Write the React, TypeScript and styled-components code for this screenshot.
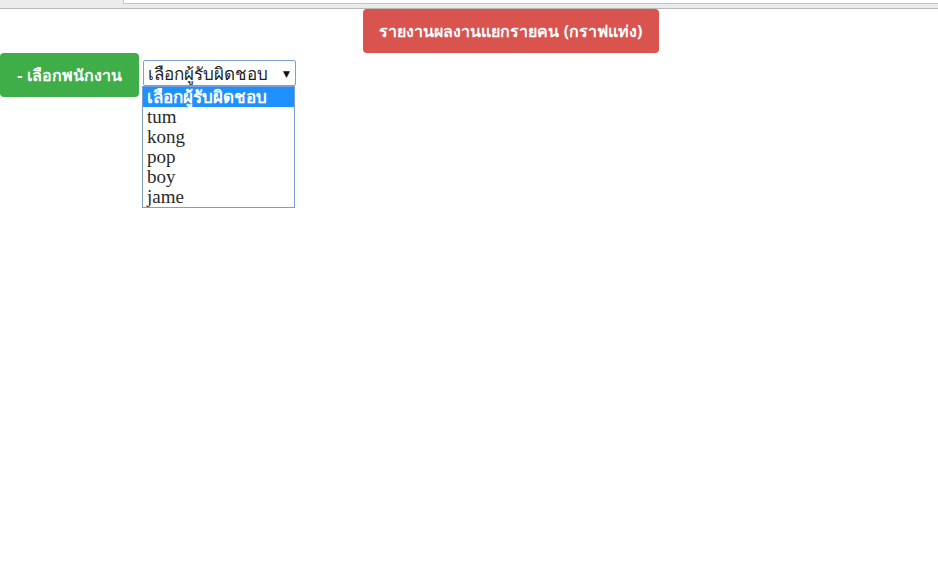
import React from "react";
import styled, { createGlobalStyle } from "styled-components";

const GlobalStyle = createGlobalStyle`
  html, body {
    margin: 0;
    padding: 0;
    background: #fff;
  }
  body {
    font-family: "Noto Sans", "DejaVu Sans", sans-serif;
  }
`;

const Chrome = styled.div`
  height: 8px;
  background: #ebebeb;
  border-bottom: 1px solid #b9b9b9;
  display: flex;
  padding-left: 123px;
`;

const AddressBar = styled.div`
  flex: 1;
  height: 3px;
  background: #fff;
  border-left: 1px solid #c4c4c4;
  border-bottom: 1px solid #c4c4c4;
  border-bottom-left-radius: 2px;
`;

const Header = styled.div`
  display: flex;
  padding-left: 363px;
`;

const Button = styled.div<{ $color: string }>`
  display: inline-flex;
  align-items: center;
  justify-content: center;
  height: 44px;
  box-sizing: border-box;
  background: ${(p) => p.$color};
  color: #fff;
  font-weight: bold;
  font-size: 16px;
  border-radius: 4px;
`;

const ReportButton = styled(Button)`
  width: 296px;
`;

const EmployeeButton = styled(Button)`
  width: 139px;
  flex-shrink: 0;
`;

const Row = styled.div`
  display: flex;
  align-items: flex-start;
  gap: 3px;
`;

const SelectWrap = styled.div`
  display: flex;
  flex-direction: column;
  margin-top: 7px;
`;

const SelectBox = styled.div`
  width: 153px;
  height: 26px;
  margin-left: 1px;
  box-sizing: border-box;
  border: 1px solid #7f9fd4;
  border-radius: 2px;
  display: flex;
  align-items: center;
  justify-content: space-between;
  padding: 0 5px 0 4px;
  font-size: 17px;
  color: #222;
  background: #fff;
`;

const Arrow = styled.span`
  font-size: 9px;
  color: #111;
`;

const ListBox = styled.div`
  width: 153px;
  box-sizing: border-box;
  border: 1px solid #7a9cd3;
  background: #fff;
`;

const Option = styled.div<{ $active?: boolean }>`
  height: 20px;
  line-height: 20px;
  padding-left: 4px;
  white-space: nowrap;
  font-size: ${(p) => (p.$active ? "17px" : "19px")};
  font-weight: ${(p) => (p.$active ? "bold" : "normal")};
  font-family: ${(p) =>
    p.$active ? `"Noto Sans", sans-serif` : `"Liberation Serif", "DejaVu Serif", serif`};
  background: ${(p) => (p.$active ? "#1e90ff" : "#fff")};
  color: ${(p) => (p.$active ? "#fff" : "#2a2a2a")};
`;

const placeholder = "เลือกผู้รับผิดชอบ";
const names = ["tum", "kong", "pop", "boy", "jame"];

export default function App() {
  return (
    <>
      <GlobalStyle />
      <Chrome>
        <AddressBar />
      </Chrome>
      <Header>
        <ReportButton $color="#d9534f">รายงานผลงานแยกรายคน (กราฟแท่ง)</ReportButton>
      </Header>
      <Row>
        <EmployeeButton $color="#3fae49">- เลือกพนักงาน</EmployeeButton>
        <SelectWrap>
          <SelectBox>
            <span>{placeholder}</span>
            <Arrow>▼</Arrow>
          </SelectBox>
          <ListBox>
            <Option $active>{placeholder}</Option>
            {names.map((n) => (
              <Option key={n}>{n}</Option>
            ))}
          </ListBox>
        </SelectWrap>
      </Row>
    </>
  );
}
